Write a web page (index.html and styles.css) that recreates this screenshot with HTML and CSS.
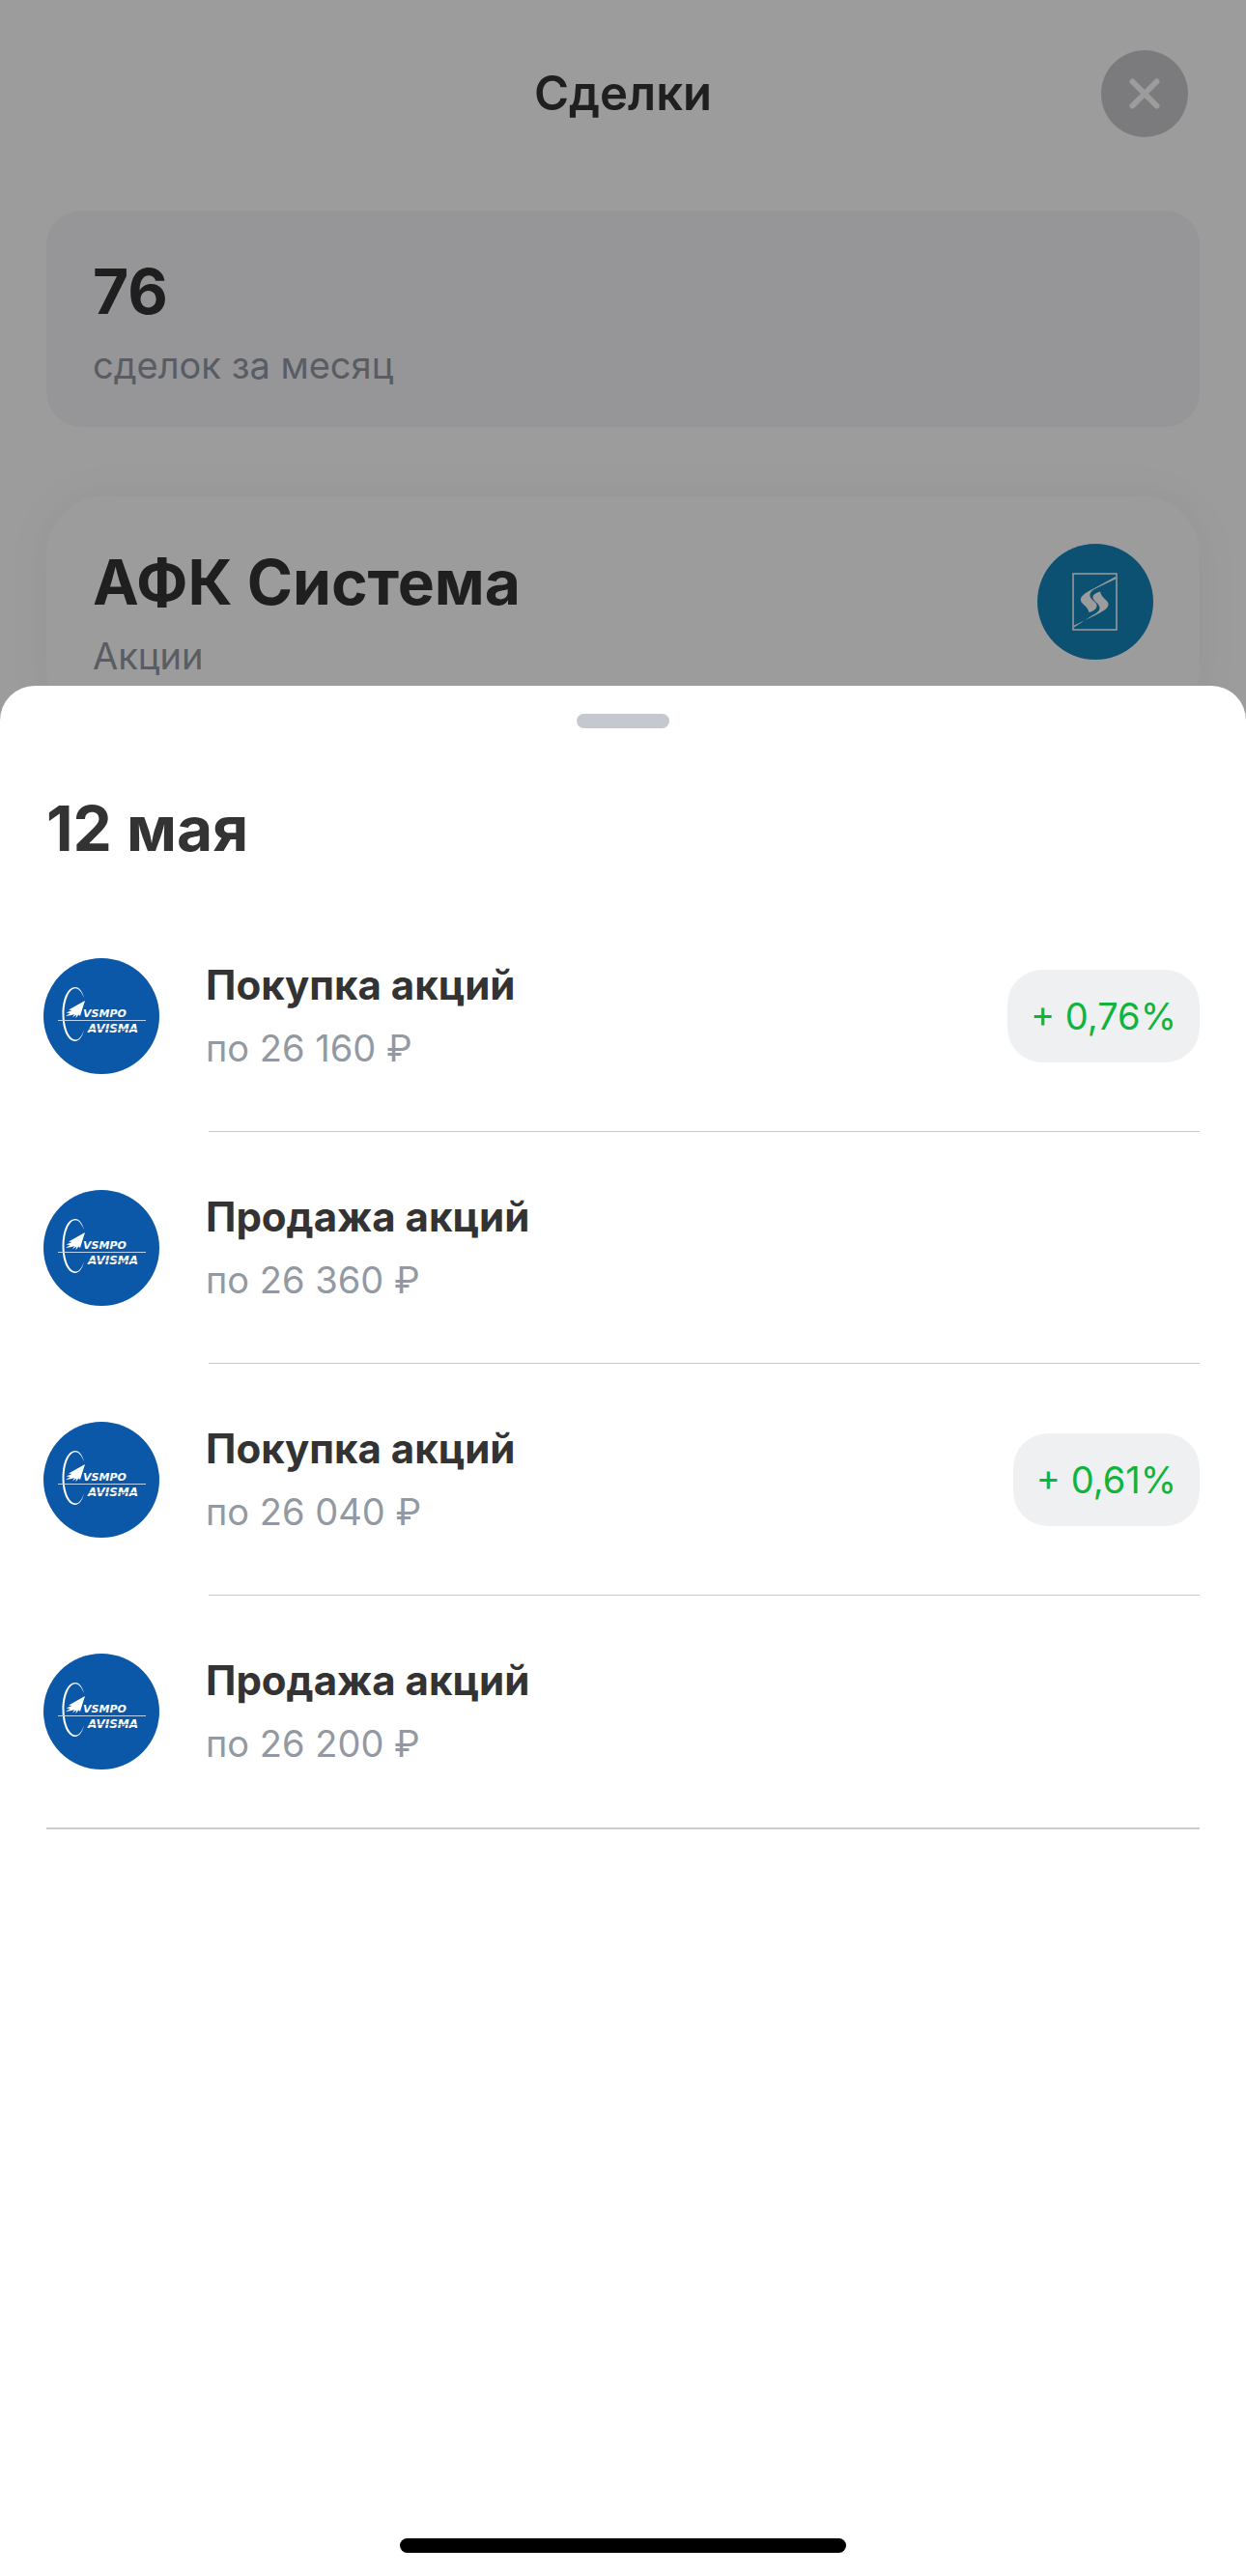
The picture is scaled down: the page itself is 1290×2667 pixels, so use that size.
FILE: index.html
```html
<!DOCTYPE html>
<html lang="ru">
<head>
<meta charset="utf-8">
<meta name="viewport" content="width=device-width, initial-scale=1">
<title>Сделки</title>
<link rel="stylesheet" href="styles.css">
</head>
<body>
<svg class="sprite" aria-hidden="true">
  <symbol id="logo-vsmpo" viewBox="0 0 120 120">
    <circle cx="60" cy="60" r="60" fill="#0b57a8"/>
    <path d="M42 41C40 33 36 30 33 30C25 30 19.500 42 19.500 58C19.500 74 25 86 33 86C37 86 40.500 81 42.500 73C40 80.500 37 84.500 33.500 84.500C27 84.500 21.500 73 21.500 58C21.500 43 27 31.200 33 31.200C36.500 31.200 39.500 35 42 41Z" fill="#fff"/>
    <path d="M43 44L26 53.500L29.500 54L23.500 56.500L27.500 57L23 60L29 59L32 58L30 61.500L34 58.500L33.500 62L36.500 58.500L38 60L39.500 55Z" fill="#fff"/>
    <path d="M15 64.500H106" stroke="#b9d3ee" stroke-width="1"/>
    <g fill="#fff" font-family="'DejaVu Sans', sans-serif" font-weight="700" font-style="italic">
      <text x="41" y="61" font-size="11">VSMPO</text>
      <text x="46" y="77" font-size="12">AVISMA</text>
    </g>
    <path d="M45 73.500H102" stroke="#0b57a8" stroke-width="1" opacity=".6"/>
  </symbol>
</svg>

<div class="app">
  <main class="screen">
    <header class="topbar">
      <h1 class="topbar-title">Сделки</h1>
      <button class="close" type="button" aria-label="Закрыть">
        <svg viewBox="0 0 90 90" aria-hidden="true"><path d="M32.500 32.500L57.500 57.500M57.500 32.500L32.500 57.500" stroke="#fff" stroke-width="6" stroke-linecap="round"/></svg>
      </button>
    </header>
    <section class="summary">
      <p class="heading">76</p>
      <p class="caption">сделок за месяц</p>
    </section>
    <section class="company">
      <div class="company-text">
        <h2 class="heading">АФК Система</h2>
        <p class="caption">Акции</p>
      </div>
      <svg class="logo" viewBox="0 0 120 120" aria-hidden="true">
        <circle cx="60" cy="60" r="60" fill="#1484ba"/>
        <rect x="37" y="31" width="45" height="58" fill="none" stroke="#fff" stroke-width="1.500"/>
        <path d="M81 34L58 46.500C48 51.500 44 55 45 59C46 63 52 64 53.500 71C58 70 62 67 61.500 63.500C61 60 55 58 54.500 54C54 50 57 48 62 45.500L81 36.500Z" fill="#fff"/>
        <path d="M38 84.500L60 74C70 69 74 66 73.500 62C72.500 58 66.500 56 65 49.500C60 51 57 53 57.500 56C58 59 64 62 64.500 66C65 69.500 61 72 57 74L38 86.500Z" fill="#fff"/>
      </svg>
    </section>
  </main>

  <div class="backdrop"></div>

  <section class="sheet" role="dialog" aria-modal="true" aria-labelledby="sheet-date">
    <div class="handle"></div>
    <h2 class="heading sheet-date" id="sheet-date">12 мая</h2>
    <ul class="deals">
      <li class="deal">
        <svg class="logo" role="img" aria-label="VSMPO AVISMA"><use href="#logo-vsmpo"/></svg>
        <div class="deal-body">
          <div class="deal-text"><h3 class="deal-title">Покупка акций</h3><p class="caption">по 26 160 ₽</p></div>
          <span class="badge">+ 0,76%</span>
        </div>
      </li>
      <li class="deal">
        <svg class="logo" role="img" aria-label="VSMPO AVISMA"><use href="#logo-vsmpo"/></svg>
        <div class="deal-body">
          <div class="deal-text"><h3 class="deal-title">Продажа акций</h3><p class="caption">по 26 360 ₽</p></div>
        </div>
      </li>
      <li class="deal">
        <svg class="logo" role="img" aria-label="VSMPO AVISMA"><use href="#logo-vsmpo"/></svg>
        <div class="deal-body">
          <div class="deal-text"><h3 class="deal-title">Покупка акций</h3><p class="caption">по 26 040 ₽</p></div>
          <span class="badge">+ 0,61%</span>
        </div>
      </li>
      <li class="deal">
        <svg class="logo" role="img" aria-label="VSMPO AVISMA"><use href="#logo-vsmpo"/></svg>
        <div class="deal-body">
          <div class="deal-text"><h3 class="deal-title">Продажа акций</h3><p class="caption">по 26 200 ₽</p></div>
        </div>
      </li>
    </ul>
    <div class="home-indicator"></div>
  </section>
</div>
</body>
</html>
```

FILE: styles.css
```css
* {
  box-sizing: border-box;
}

body,
h1,
h2,
h3,
p,
ul {
  margin: 0;
  padding: 0;
}

body {
  background: #fff;
  color: #333;
  font-family: Inter, "Liberation Sans", sans-serif;
}

.sprite {
  display: none;
}

/* Screen, backdrop and sheet are stacked in a single grid cell */
.app {
  display: grid;
  grid-template-columns: minmax(0, 1fr);
  min-height: 100vh;
}

.screen,
.backdrop,
.sheet {
  grid-area: 1 / 1;
}

.screen {
  display: flex;
  flex-direction: column;
  padding: 52px 48px 0;
  overflow: hidden;
}

.backdrop {
  background: rgba(0, 0, 0, 0.39);
}

.topbar {
  display: grid;
  grid-template-columns: 1fr auto 1fr;
  align-items: center;
  padding-right: 12px;
  padding-left: 12px;
}

.topbar-title {
  grid-column: 2;
  font-size: 49px;
  line-height: 60px;
  font-weight: 600;
}

.close {
  justify-self: end;
  width: 90px;
  height: 90px;
  padding: 0;
  border: 0;
  border-radius: 50%;
  background: #cacace;
}

.close svg {
  display: block;
}

.heading {
  font-size: 64px;
  line-height: 80px;
  font-weight: 700;
}

.caption {
  font-size: 38px;
  line-height: 48px;
  color: #9299a2;
}

.summary {
  display: flex;
  flex-direction: column;
  gap: 12px;
  margin-top: 76px;
  padding: 44px 48px 40px;
  border-radius: 36px;
  background: #f5f5f8;
}

.company {
  display: flex;
  justify-content: space-between;
  margin-top: 72px;
  padding: 49px 48px;
  border-radius: 60px;
  background: #fff;
  box-shadow: 0 0 48px rgba(0, 0, 0, 0.05);
}

.company-text {
  display: flex;
  flex-direction: column;
  gap: 12px;
}

.logo {
  display: block;
  flex: none;
  width: 120px;
  height: 120px;
}

.sheet {
  display: flex;
  flex-direction: column;
  margin-top: 710px;
  padding: 29px 48px 24px;
  border-radius: 36px 36px 0 0;
  background: #fff;
}

.handle {
  align-self: center;
  width: 96px;
  height: 15px;
  border-radius: 8px;
  background: #c6c8cf;
}

.sheet-date {
  margin-top: 64px;
}

.deals {
  margin-top: 34px;
  border-bottom: 2px solid #cbcccd;
  list-style: none;
}

.deal {
  display: grid;
  grid-template-columns: auto minmax(0, 1fr);
  align-items: center;
  gap: 51px;
  margin-left: -3px;
}

.deal-body {
  display: flex;
  align-items: center;
  justify-content: space-between;
  height: 240px;
  border-bottom: 1px solid #c8c9ca;
}

.deal:last-child .deal-body {
  border-bottom: 0;
}

.deal-text {
  display: flex;
  flex-direction: column;
  gap: 16px;
  margin-left: -3px;
}

.deal-title {
  font-size: 42px;
  line-height: 50px;
  font-weight: 700;
}

.badge {
  padding: 24px;
  border-radius: 36px;
  background: #eef0f2;
  color: #10b33c;
  font-size: 38px;
  line-height: 48px;
}

.home-indicator {
  align-self: center;
  width: 462px;
  max-width: 100%;
  height: 15px;
  margin-top: auto;
  border-radius: 8px;
  background: #000;
}
```
